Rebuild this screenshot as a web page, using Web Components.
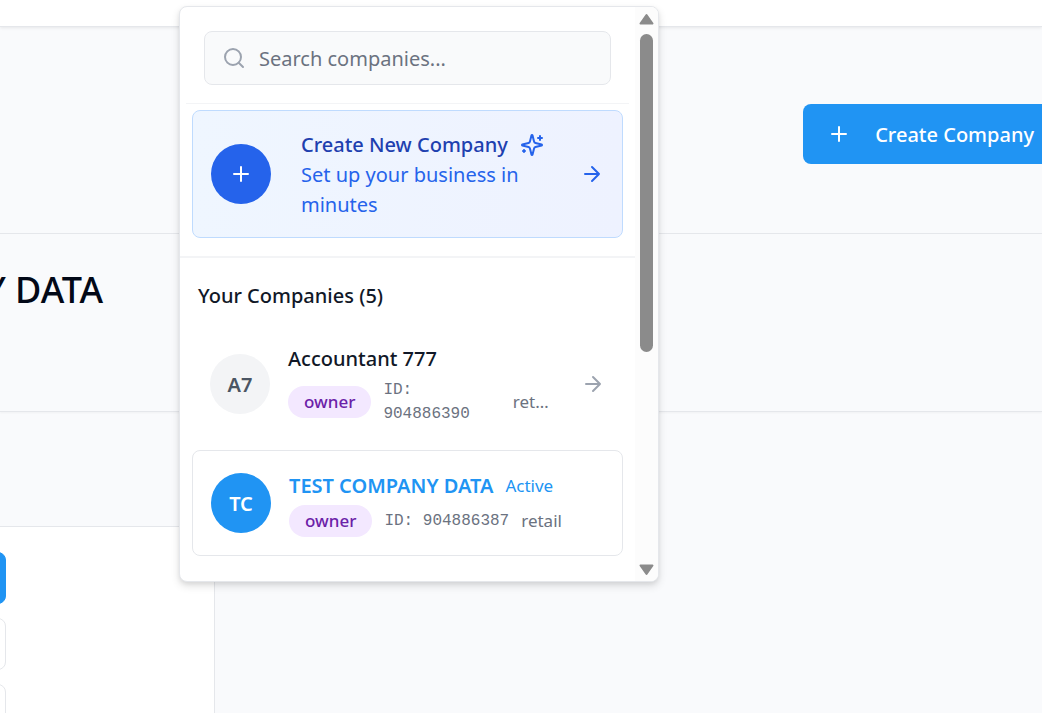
<!DOCTYPE html>
<html lang="en">
<head>
<meta charset="utf-8">
<meta name="viewport" content="width=device-width, initial-scale=1">
<title>Companies</title>
<style>
html, body { margin: 0; height: 100%; }
body { font: 20px/30px "Noto Sans", "Open Sans", sans-serif; color: #111827; background: #f9fafc; }
</style>
</head>
<body>
<company-page></company-page>
<script>
const define = (name, html, setup) => {
  const template = document.createElement('template');
  template.innerHTML = `<style>*{box-sizing:border-box}button{font:inherit;color:inherit;text-align:left;border:0;background:none;padding:0;margin:0;cursor:pointer}</style>` + html;
  customElements.define(name, class extends HTMLElement {
    connectedCallback() {
      if (this.shadowRoot) return;
      const root = this.attachShadow({ mode: 'open' });
      root.append(template.content.cloneNode(true));
      if (setup) setup(this, root);
    }
  });
};

const icons = {
  plus: '<path d="M5 12h14M12 5v14"/>',
  arrow: '<path d="M5 12h14M12 5l7 7-7 7"/>',
  search: '<circle cx="11" cy="11" r="8"/><path d="m21 21-4.3-4.3"/>',
  sparkles: '<path d="M9.937 15.5A2 2 0 0 0 8.5 14.063l-6.135-1.582a.5.5 0 0 1 0-.962L8.5 9.936A2 2 0 0 0 9.937 8.5l1.582-6.135a.5.5 0 0 1 .963 0L14.063 8.5A2 2 0 0 0 15.5 9.937l6.135 1.581a.5.5 0 0 1 0 .964L15.5 14.063a2 2 0 0 0-1.437 1.437l-1.582 6.135a.5.5 0 0 1-.963 0z"/><path d="M20 3v4M22 5h-4M4 17v2M5 18H3"/>'
};
define('ui-icon', `<style>
:host{display:block;flex:none;width:24px;height:24px}
svg{display:block;width:100%;height:100%;fill:none;stroke:currentColor;stroke-width:2;stroke-linecap:round;stroke-linejoin:round}
</style><svg viewBox="0 0 24 24" aria-hidden="true"></svg>`,
(host, root) => { root.querySelector('svg').innerHTML = icons[host.getAttribute('name')]; });

define('round-avatar', `<style>
:host{display:grid;place-items:center;flex:none;width:60px;height:60px;padding-top:var(--avatar-drop,2px);box-sizing:border-box;border-radius:50%;background:var(--avatar-bg,#f3f4f6);color:var(--avatar-fg,#4b5563);font-weight:600}
</style><slot></slot>`);

define('role-badge', `<style>
:host{display:block;flex:none;padding:0 16px;border-radius:16px;background:#f3e8ff;color:#6b21a8;font-weight:500;font-size:17px;line-height:32px}
</style><slot></slot>`);

define('company-search', `<style>
:host{display:block;margin:0 6px;padding:24px 18px 18px;border-bottom:1px solid #f3f4f6}
label{display:flex;align-items:center;gap:13px;height:54px;padding:0 17px;border:1px solid #e5e7eb;border-radius:8px;background:#f9fafb;color:#9ca3af}
input{flex:1;min-width:0;border:0;outline:0;padding:2px 0 0;background:none;font:inherit;color:#111827}
input::placeholder{color:#6b7280;opacity:1}
</style><label><ui-icon name="search"></ui-icon><input type="text" placeholder="Search companies..." aria-label="Search companies"></label>`);

define('create-card', `<style>
:host{display:block;padding:6px 12px 18px;border-bottom:2px solid #f3f4f6}
button{display:flex;align-items:center;width:100%;padding:17px 18px;border:1px solid #bfdbfe;border-radius:8px;background:linear-gradient(90deg,#eff6ff,#eef2ff);color:#2563eb}
round-avatar{--avatar-bg:#2563eb;--avatar-fg:#fff;--avatar-drop:0}
.text{flex:1;min-width:0;margin:0 30px;padding-top:2px}
.title{display:flex;align-items:center;gap:12px;font-weight:500;color:#1e40af}
.title ui-icon{color:#2563eb}
.sub{display:block}
</style><button type="button"><round-avatar><ui-icon name="plus"></ui-icon></round-avatar>
<span class="text"><span class="title"><span>Create New Company</span><ui-icon name="sparkles"></ui-icon></span><span class="sub">Set up your business in minutes</span></span>
<ui-icon name="arrow"></ui-icon></button>`);

define('company-item', `<style>
:host{display:block}
button{display:flex;align-items:center;width:100%;padding:18px;border-radius:8px}
:host([active]) button{border:1px solid #e5e7eb}
:host([active]){--avatar-bg:#2094f3;--avatar-fg:#fff}
.text{flex:1;min-width:0;margin-left:18px;padding-top:2px}
.top,.meta{display:flex;align-items:center;gap:12px}
.top{margin-bottom:4px;white-space:nowrap}
.name{font-weight:500}
.state{font-size:17px;color:#2094f3}
:host([active]) .name{color:#2094f3;font-weight:600}
:host(:not([active])) .state{display:none}
.meta{color:#6b7280;font-size:17px;line-height:24px}
.id{font-family:"Liberation Mono",monospace;font-size:16px}
.kind{min-width:0;overflow:hidden;text-overflow:ellipsis;white-space:nowrap}
ui-icon{margin-left:30px;color:#9ca3af}
:host([active]) ui-icon{display:none}
</style><button type="button"><round-avatar><slot name="initials"></slot></round-avatar>
<span class="text"><span class="top"><span class="name"><slot></slot></span><span class="state">Active</span></span>
<span class="meta"><role-badge>owner</role-badge><span class="id"><slot name="id"></slot></span><span class="kind">retail</span></span></span>
<ui-icon name="arrow"></ui-icon></button>`);

define('scroll-track', `<style>
:host{display:flex;flex-direction:column;align-items:center;width:23px;padding:6px 0 5px;background:#fcfcfc;color:#8b8b8b}
svg{display:block;width:15px;height:12px;fill:currentColor;stroke:currentColor;stroke-width:2;stroke-linejoin:round}
.track{flex:1;width:13px;padding:9px 0}
.thumb{height:61%;border-radius:7px;background:currentColor}
</style><svg viewBox="0 0 15 12"><path d="M7.5 2 13.500 10.500H1.500Z"/></svg><div class="track"><div class="thumb"></div></div><svg viewBox="0 0 15 12"><path d="M7.500 10 13.500 1.500H1.500Z"/></svg>`);

define('company-menu', `<style>
:host{display:flex;border:1px solid #e5e7eb;border-radius:8px;background:#fff;overflow:hidden;box-shadow:0 4px 8px rgba(0,0,0,.12),0 2px 4px rgba(0,0,0,.06)}
.body{flex:1;min-width:0}
h2{margin:0;padding:23px 18px 13px;font:inherit;font-weight:500}
.list{display:grid;gap:6px;padding:0 12px 25px}
</style><div class="body"><company-search></company-search><create-card></create-card>
<h2>Your Companies (5)</h2>
<div class="list">
<company-item><span slot="initials">A7</span>Accountant 777<span slot="id">ID: 904886390</span></company-item>
<company-item active><span slot="initials">TC</span>TEST COMPANY DATA<span slot="id">ID: 904886387</span></company-item>
</div></div><scroll-track></scroll-track>`);

define('side-panel', `<style>
:host{display:flex;flex-direction:column;gap:14px;width:215px;padding:25px 0;border:solid #e5e7eb;border-width:1px 1px 0 0;background:#fff;overflow:hidden}
button{flex:none;width:36px;height:52px;margin-left:-30px;border:1px solid #e5e7eb;border-radius:8px}
.on{background:#2094f3;border-color:#2094f3}
</style><button class="on" type="button" aria-label="First section"></button><button type="button" aria-label="Second section"></button><button type="button" aria-label="Third section"></button>`);

define('company-page', `<style>
:host{display:flex;flex-direction:column;position:relative;height:100vh;overflow:hidden}
header{flex:none;height:27px;background:#fff;border-bottom:1px solid #e5e7eb;box-shadow:0 1px 3px rgba(0,0,0,.08)}
.actions{flex:none;display:flex;justify-content:flex-end;height:206px;padding-top:77px}
.actions button{display:flex;align-items:center;gap:24px;flex:none;height:60px;padding:0 24px;margin-right:-16px;border-radius:8px;background:#2094f3;color:#fff;font-weight:500;white-space:nowrap}
.actions span{padding-top:2px}
.hero{flex:none;height:179px;padding-top:32px;border:solid #e5e7eb;border-width:1px 0;box-shadow:0 1px 2px rgba(0,0,0,.04)}
h1{display:flex;justify-content:flex-end;width:103px;margin:0;font-size:36px;line-height:48px;font-weight:500;color:#020817;white-space:nowrap}
side-panel{flex:1;margin-top:114px}
company-menu{position:absolute;top:6px;left:179px;width:480px}
</style><header></header>
<div class="actions"><button type="button"><ui-icon name="plus"></ui-icon><span>Create Company</span></button></div>
<section class="hero"><h1>Y DATA</h1></section>
<side-panel></side-panel>
<company-menu></company-menu>`);
</script>
</body>
</html>
